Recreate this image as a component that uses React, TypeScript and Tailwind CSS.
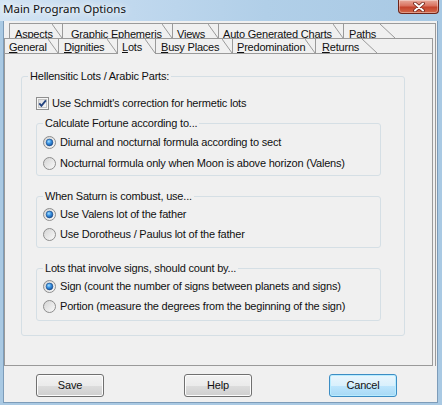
import React, { useId } from 'react';

type TabDef = {
  label: string;
  box: string;
  pad: string;
  diag: string;
  edge: boolean;
  accel?: boolean;
  selected?: boolean;
};

const backRow: TabDef[] = [
  { label: 'Aspects', box: 'w-[53px]', pad: 'pl-[5px]', diag: 'w-[10px]', edge: true },
  { label: 'Graphic Ephemeris', box: 'w-[110px]', pad: 'pl-[8px]', diag: 'w-[10px]', edge: true },
  { label: 'Views', box: 'w-[46px]', pad: 'pl-[4px]', diag: 'w-[10px]', edge: true },
  { label: 'Auto Generated Charts', box: 'w-[125px]', pad: 'pl-[4px]', diag: 'w-[10px]', edge: true },
  { label: 'Paths', box: 'w-[52px]', pad: 'pl-[5px]', diag: 'w-[15px]', edge: true },
];

const frontRow: TabDef[] = [
  { label: 'General', box: 'w-[53px]', pad: 'pl-[4px]', diag: 'w-[10px]', edge: false, accel: true },
  { label: 'Dignities', box: 'w-[59px]', pad: 'pl-[5px]', diag: 'w-[10px]', edge: true, accel: true },
  { label: 'Lots', box: 'w-[38px]', pad: 'pl-[4px]', diag: 'w-[10px]', edge: true, accel: true, selected: true },
  { label: 'Busy Places', box: 'w-[77px]', pad: 'pl-[5px]', diag: 'w-[10px]', edge: true, accel: true },
  { label: 'Predomination', box: 'w-[83px]', pad: 'pl-[4px]', diag: 'w-[10px]', edge: true, accel: true },
  { label: 'Returns', box: 'w-[62px]', pad: 'pl-[6px]', diag: 'w-[15px]', edge: true, accel: true },
];

const Tab = ({ tab, back }: { tab: TabDef; back?: boolean }) => {
  const edge = tab.edge ? 'border-l border-[#9a9a9a]' : '';
  const shape = back
    ? 'h-[14px] overflow-hidden pt-[4px]'
    : tab.selected
      ? 'z-10 h-[15px] bg-[#f0f0f0] pt-[2px]'
      : 'h-[14px] pt-[2px]';
  return (
    <div className={`relative shrink-0 ${tab.box} ${tab.pad} ${edge} ${shape}`}>
      <span className="block whitespace-nowrap leading-[13px]">
        {tab.accel ? (
          <>
            <u className="underline-offset-1">{tab.label[0]}</u>
            {tab.label.slice(1)}
          </>
        ) : (
          tab.label
        )}
      </span>
      <svg
        className={`absolute right-0 top-0 h-[14px] ${tab.diag}`}
        viewBox="0 0 10 14"
        preserveAspectRatio="none"
      >
        <line x1="0" y1="0" x2="10" y2="14" stroke="#9a9a9a" vectorEffect="non-scaling-stroke" />
      </svg>
    </div>
  );
};

const Radio = ({ checked }: { checked?: boolean }) => {
  const id = useId().replace(/[^a-zA-Z0-9]/g, '');
  return (
    <svg width="13" height="13" viewBox="0 0 13 13" className="shrink-0">
      <defs>
        <linearGradient id={`${id}ring`} x1="0" y1="0" x2="1" y2="1">
          <stop offset="0" stopColor="#d2d2d2" />
          <stop offset="1" stopColor="#fbfbfb" />
        </linearGradient>
        <radialGradient id={`${id}dot`} cx="0.4" cy="0.35" r="0.7">
          <stop offset="0" stopColor="#a6e0ff" />
          <stop offset="0.45" stopColor="#3a93e3" />
          <stop offset="1" stopColor="#134c95" />
        </radialGradient>
      </defs>
      <circle cx="6.5" cy="6.5" r="6" fill={`url(#${id}ring)`} stroke="#8d8d8d" />
      {checked && (
        <circle cx="6.5" cy="6.5" r="3.4" fill={`url(#${id}dot)`} stroke="#1a4a86" strokeWidth="0.6" />
      )}
    </svg>
  );
};

const Check = () => {
  const id = useId().replace(/[^a-zA-Z0-9]/g, '');
  return (
    <svg width="13" height="13" viewBox="0 0 13 13" className="shrink-0">
      <defs>
        <linearGradient id={`${id}box`} x1="0" y1="0" x2="1" y2="1">
          <stop offset="0" stopColor="#dcdcdc" />
          <stop offset="1" stopColor="#f8f8f8" />
        </linearGradient>
      </defs>
      <rect x="0.5" y="0.5" width="12" height="12" fill="#f6f6f6" stroke="#8f8f8f" />
      <rect x="2.5" y="2.5" width="8" height="8" fill={`url(#${id}box)`} stroke="#c4c4c4" />
      <path d="M3.3 6.4 L5.4 8.9 L9.9 3.4" fill="none" stroke="#23437f" strokeWidth="1.8" />
    </svg>
  );
};

const Group = ({
  caption,
  className,
  children,
}: {
  caption: string;
  className: string;
  children: React.ReactNode;
}) => (
  <div className={`rounded-[3px] border border-[#d5dfe5] ${className}`}>
    <div className="-mt-[7px] ml-[6px] w-fit bg-[#f0f0f0] px-[2px] leading-[13px]">{caption}</div>
    {children}
  </div>
);

const RadioRow = ({ checked, gap, label }: { checked?: boolean; gap: string; label: string }) => (
  <div className={`ml-[6px] flex h-[13px] items-center gap-[4px] ${gap}`}>
    <Radio checked={checked} />
    <span className="whitespace-nowrap leading-[13px]">{label}</span>
  </div>
);

const CloseButton = () => (
  <div className="mr-[3px] flex h-[14px] w-[41px] items-center justify-center rounded-b-[4px] border border-t-0 border-[#6e2418] bg-[linear-gradient(#e8aa9c_0%,#d9725f_45%,#c4432c_55%,#d2694a_100%)] shadow-[inset_0_0_0_1px_rgba(255,255,255,0.35)]">
    <svg width="12" height="10" viewBox="0 0 12 10">
      <path d="M2 1.5 L10 8.5 M10 1.5 L2 8.5" stroke="#6b1f14" strokeWidth="3.6" strokeLinecap="round" />
      <path d="M2 1.5 L10 8.5 M10 1.5 L2 8.5" stroke="#ffffff" strokeWidth="2" strokeLinecap="round" />
    </svg>
  </div>
);

const Button = ({ label, primary }: { label: string; primary?: boolean }) => (
  <button
    type="button"
    className={
      primary
        ? 'h-[23px] w-[68px] shrink-0 rounded-[3px] border border-[#3c8dc4] bg-[linear-gradient(#eaf6fd_0%,#d9f0fc_50%,#bee6fd_50%,#a7d9f5_100%)] leading-[13px] shadow-[inset_0_0_0_1px_#b8ecff]'
        : 'h-[23px] w-[68px] shrink-0 rounded-[3px] border border-[#707070] bg-[linear-gradient(#f2f2f2_0%,#ebebeb_50%,#dddddd_50%,#cfcfcf_100%)] leading-[13px] shadow-[inset_0_0_0_1px_#fcfcfc]'
    }
  >
    {label}
  </button>
);

export default function App() {
  return (
    <div className="flex h-[405px] w-[442px] flex-col overflow-hidden bg-[#a9c9e3] font-['Liberation_Sans',Arial,sans-serif] text-[11px] tracking-[-0.2px] text-[#111]">
      {/* title bar */}
      <div className="flex h-[21px] shrink-0 items-start justify-between bg-[linear-gradient(90deg,#d3e4f3_0%,#c0d8ee_30%,#b1cfe8_60%,#a8c9e4_100%)]">
        <span className="pl-[3px] pt-[1px] font-['Noto_Sans',sans-serif] text-[11.5px] leading-[15px] tracking-normal [text-shadow:0_0_6px_#fff,0_0_10px_#fff]">
          Main Program Options
        </span>
        <CloseButton />
      </div>

      {/* client area */}
      <div className="mb-[2px] ml-[3px] mr-[4px] flex flex-1 flex-col border-x border-b border-[#7d9cb9] bg-[#f0f0f0]">
        <div className="-mb-[14px] ml-[5px] mt-[2px] w-[427px] border-r border-t border-[#9a9a9a]">
          <div className="flex h-[14px]">
            {backRow.map((t) => (
              <Tab key={t.label} tab={t} back />
            ))}
          </div>

          <div className="-ml-[5px] w-[429px] border border-[#9a9a9a]">
            <div className="flex h-[14px] items-start">
              {frontRow.map((t) => (
                <Tab key={t.label} tab={t} />
              ))}
            </div>

            <div className="border-t border-[#9a9a9a] pb-[29px] pl-[16px] pt-[22px]">
              <Group caption="Hellensitic Lots / Arabic Parts:" className="w-[384px] pb-[14px]">
                <div className="ml-[14px] mt-[14px] flex h-[13px] items-center gap-[3px]">
                  <Check />
                  <span className="whitespace-nowrap leading-[13px]">Use Schmidt's correction for hermetic lots</span>
                </div>

                <Group caption="Calculate Fortune according to..." className="ml-[14px] mt-[13px] w-[345px] pb-[5px]">
                  <RadioRow checked gap="mt-[6px]" label="Diurnal and nocturnal formula according to sect" />
                  <RadioRow gap="mt-[8px]" label="Nocturnal formula only when Moon is above horizon (Valens)" />
                </Group>

                <Group caption="When Saturn is combust, use..." className="ml-[14px] mt-[20px] w-[345px] pb-[6px]">
                  <RadioRow checked gap="mt-[5px]" label="Use Valens lot of the father" />
                  <RadioRow gap="mt-[7px]" label="Use Dorotheus / Paulus lot of the father" />
                </Group>

                <Group caption="Lots that involve signs, should count by..." className="ml-[14px] mt-[20px] w-[345px] pb-[7px]">
                  <RadioRow checked gap="mt-[5px]" label="Sign (count the number of signs between planets and signs)" />
                  <RadioRow gap="mt-[7px]" label="Portion (measure the degrees from the beginning of the sign)" />
                </Group>
              </Group>
            </div>
          </div>
        </div>

        <div className="mt-[22px] flex pl-[32px]">
          <Button label="Save" />
          <div className="w-[80px] shrink-0" />
          <Button label="Help" />
          <div className="w-[77px] shrink-0" />
          <Button label="Cancel" primary />
        </div>
      </div>
    </div>
  );
}
